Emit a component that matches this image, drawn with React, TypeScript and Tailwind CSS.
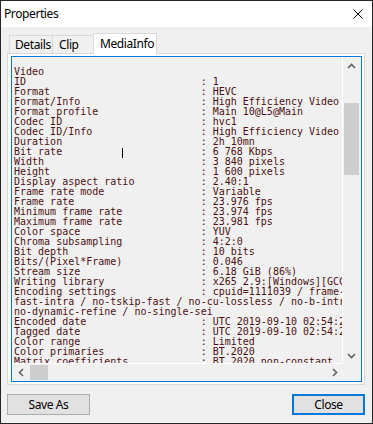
import React from "react";

type Row = { name?: string; value?: string; raw?: string };

const rows: Row[] = [
  { raw: "" },
  { raw: "Video" },
  { name: "ID", value: "1" },
  { name: "Format", value: "HEVC" },
  { name: "Format/Info", value: "High Efficiency Video Coding" },
  { name: "Format profile", value: "Main 10@L5@Main" },
  { name: "Codec ID", value: "hvc1" },
  { name: "Codec ID/Info", value: "High Efficiency Video Coding" },
  { name: "Duration", value: "2h 10mn" },
  { name: "Bit rate", value: "6 768 Kbps" },
  { name: "Width", value: "3 840 pixels" },
  { name: "Height", value: "1 600 pixels" },
  { name: "Display aspect ratio", value: "2.40:1" },
  { name: "Frame rate mode", value: "Variable" },
  { name: "Frame rate", value: "23.976 fps" },
  { name: "Minimum frame rate", value: "23.974 fps" },
  { name: "Maximum frame rate", value: "23.981 fps" },
  { name: "Color space", value: "YUV" },
  { name: "Chroma subsampling", value: "4:2:0" },
  { name: "Bit depth", value: "10 bits" },
  { name: "Bits/(Pixel*Frame)", value: "0.046" },
  { name: "Stream size", value: "6.18 GiB (86%)" },
  { name: "Writing library", value: "x265 2.9:[Windows][GCC 8.2.0][64 bit] 10bit" },
  { name: "Encoding settings", value: "cpuid=1111039 / frame-threads=4 / numa-pools=16 / wpp" },
  { raw: "fast-intra / no-tskip-fast / no-cu-lossless / no-b-intra / no-splitrd-skip" },
  { raw: "no-dynamic-refine / no-single-sei" },
  { name: "Encoded date", value: "UTC 2019-09-10 02:54:25" },
  { name: "Tagged date", value: "UTC 2019-09-10 02:54:25" },
  { name: "Color range", value: "Limited" },
  { name: "Color primaries", value: "BT.2020" },
  { name: "Matrix coefficients", value: "BT.2020 non-constant" },
];

const lineText = (r: Row) =>
  r.raw !== undefined ? r.raw : (r.name ?? "").padEnd(31, " ") + ": " + (r.value ?? "");

const Chevron = ({ dir }: { dir: "up" | "down" | "left" | "right" }) => {
  const pts = {
    up: "1,5 4.5,1.5 8,5",
    down: "1,1 4.5,4.5 8,1",
    left: "5,1 1.5,4.5 5,8",
    right: "1,1 4.5,4.5 1,8",
  }[dir];
  const vertical = dir === "up" || dir === "down";
  return (
    <svg
      width={vertical ? 9 : 6}
      height={vertical ? 6 : 9}
      viewBox={vertical ? "0 0 9 6" : "0 0 6 9"}
      fill="none"
    >
      <polyline points={pts} stroke="#606060" strokeWidth="1.6" />
    </svg>
  );
};

export default function App() {
  return (
    <div className="w-[373px] h-[424px] border border-[#262626] bg-[#f0f0f0] flex flex-col font-['Segoe_UI','Noto_Sans',sans-serif] text-[12px] tracking-[-0.4px] text-black overflow-hidden">
      {/* title bar */}
      <div className="h-[26px] bg-white flex items-center justify-between pl-[3px] pr-[9px] shrink-0">
        <span className="leading-none">Properties</span>
        <svg width="10" height="10" viewBox="0 0 10 10">
          <path d="M0.5 0.5 L9.5 9.5 M9.5 0.5 L0.5 9.5" stroke="#000" strokeWidth="1" />
        </svg>
      </div>

      {/* tabs */}
      <div className="flex items-end h-[20px] mt-[6px] pl-[8px] shrink-0">
        <div className="h-[18px] w-[44px] border border-b-0 border-[#d9d9d9] bg-[#f0f0f0] pl-[5px] flex items-center leading-none">
          Details
        </div>
        <div className="h-[18px] w-[41px] border-t border-r border-[#d9d9d9] bg-[#f0f0f0] pl-[6px] flex items-center leading-none">
          Clip
        </div>
        <div className="relative z-10 -ml-px -mb-px h-[21px] w-[64px] border border-b-0 border-[#d9d9d9] bg-white pl-[6px] flex items-center leading-none">
          MediaInfo
        </div>
      </div>

      {/* tab page */}
      <div className="ml-[6px] w-[358px] h-[332px] border border-[#d9d9d9] bg-white pt-[2px] pl-[3px] shrink-0">
        <div className="w-[351px] h-[326px] border border-[#0078d7] bg-[#f0f0f0] grid grid-cols-[331px_17px] grid-rows-[307px_17px]">
          {/* text viewport */}
          <div className="relative overflow-hidden border-r border-b border-white pl-[2px] font-['DejaVu_Sans_Mono','Liberation_Mono',monospace] text-[10px] leading-[10px] tracking-normal text-[#4e1010] whitespace-pre">
            {rows.map((r, i) => (
              <div key={i} className="h-[10px]">
                {lineText(r)}
              </div>
            ))}
            <div className="absolute left-[110px] top-[91px] w-px h-[10px] bg-black" />
          </div>

          {/* vertical scrollbar */}
          <div className="flex flex-col">
            <div className="h-[17px] flex items-center justify-center">
              <Chevron dir="up" />
            </div>
            <div className="flex-1 relative">
              <div className="absolute left-px right-px top-[29px] h-[72px] bg-[#cdcdcd]" />
            </div>
            <div className="h-[17px] flex items-center justify-center">
              <Chevron dir="down" />
            </div>
          </div>

          {/* horizontal scrollbar */}
          <div className="flex items-stretch">
            <div className="w-[17px] flex items-center justify-center">
              <Chevron dir="left" />
            </div>
            <div className="flex-1 relative">
              <div className="absolute top-px bottom-px left-px w-[18px] bg-[#cdcdcd]" />
            </div>
            <div className="w-[17px] flex items-center justify-center">
              <Chevron dir="right" />
            </div>
          </div>
          <div />
        </div>
      </div>

      {/* buttons */}
      <div className="flex justify-between pl-[6px] pr-[7px] mt-[9px]">
        <button className="w-[83px] h-[21px] border border-[#adadad] bg-[#e1e1e1] flex items-center justify-center leading-none">
          Save As
        </button>
        <button className="w-[73px] h-[21px] border-2 border-[#0078d7] bg-[#e1e1e1] flex items-center justify-center leading-none">
          Close
        </button>
      </div>
    </div>
  );
}
